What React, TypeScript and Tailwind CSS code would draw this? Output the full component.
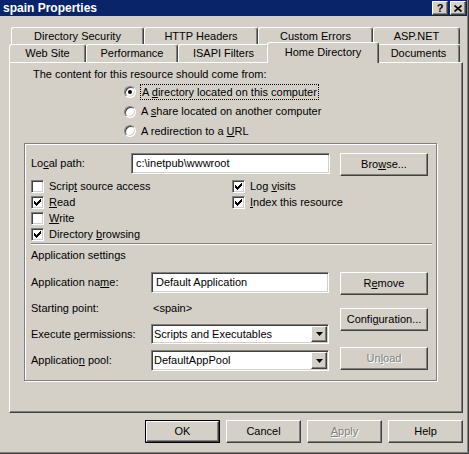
import React from 'react';

const RAISED =
  'border border-t-white border-l-white border-r-[#404040] border-b-[#404040] shadow-[inset_-1px_-1px_#808080,inset_1px_1px_#d4d0c8]';
const SUNKEN =
  'border border-t-[#808080] border-l-[#808080] border-r-white border-b-white shadow-[inset_1px_1px_#404040,inset_-1px_-1px_#d4d0c8]';
const TAB =
  'h-full flex items-center justify-center border-l border-t border-r border-white border-r-[#404040] shadow-[inset_-1px_0_#808080] rounded-t-[3px]';
const DISABLED = 'text-[#808080] [text-shadow:1px_1px_0_#fff]';

type BtnProps = { children: React.ReactNode; disabled?: boolean; className?: string };

const Button = ({ children, disabled, className = '' }: BtnProps) => (
  <div className={`${RAISED} h-[23px] bg-[#d4d0c8] flex items-center justify-center ${disabled ? DISABLED : ''} ${className}`}>
    {children}
  </div>
);

const CheckMark = () => (
  <svg width="7" height="7" viewBox="0 0 7 7" shapeRendering="crispEdges">
    <rect x="6" y="0" width="1" height="1" />
    <rect x="5" y="1" width="2" height="1" />
    <rect x="0" y="2" width="1" height="1" />
    <rect x="4" y="2" width="3" height="1" />
    <rect x="0" y="3" width="2" height="1" />
    <rect x="3" y="3" width="3" height="1" />
    <rect x="0" y="4" width="5" height="1" />
    <rect x="1" y="5" width="3" height="1" />
    <rect x="2" y="6" width="1" height="1" />
  </svg>
);

const Check = ({ checked, children, tall }: { checked?: boolean; children: React.ReactNode; tall?: boolean }) => (
  <div className={`flex items-center gap-[5px] ${tall ? 'h-[17px]' : 'h-[16px]'}`}>
    <span className={`${SUNKEN} w-[13px] h-[13px] bg-white flex items-center justify-center shrink-0`}>
      {checked && <CheckMark />}
    </span>
    <span>{children}</span>
  </div>
);

const Radio = ({ checked, children, h }: { checked?: boolean; children: React.ReactNode; h: string }) => (
  <div className={`flex items-center gap-[5px] pl-[114px] ${h}`}>
    <span className="w-[12px] h-[12px] rounded-full bg-white border border-t-[#808080] border-l-[#808080] border-r-white border-b-white shadow-[inset_1px_1px_#404040,inset_-1px_-1px_#d4d0c8] flex items-center justify-center shrink-0">
      {checked && <span className="w-[4px] h-[4px] rounded-full bg-black" />}
    </span>
    {children}
  </div>
);

const Select = ({ value, className = '' }: { value: string; className?: string }) => (
  <div className={`${SUNKEN} bg-white p-[1px] flex w-[178px] ${className}`}>
    <span className="flex-1 pl-[1px] flex items-center">{value}</span>
    <span className={`${RAISED} w-[16px] h-full bg-[#d4d0c8] flex items-center justify-center`}>
      <svg width="7" height="4" viewBox="0 0 7 4">
        <path d="M0 0h7L3.5 4z" fill="#000" />
      </svg>
    </span>
  </div>
);

const App = () => {
  return (
    <div className="w-[469px] h-[454px] bg-[#d4d0c8] border-r border-b border-[#404040] shadow-[inset_-1px_-1px_#808080] font-['Liberation_Sans',Arial,sans-serif] text-[11px] leading-[13px] text-black overflow-hidden select-none">
      {/* title bar */}
      <div className="h-[16px] mr-[1px] bg-[#0a246a] flex items-center justify-between pl-[3px] pr-[1px]">
        <span className="text-white font-bold text-[12px]">spain Properties</span>
        <div className="flex gap-[2px]">
          <div className={`${RAISED} w-[16px] h-[14px] bg-[#d4d0c8] flex items-center justify-center font-bold text-[11px] leading-none`}>?</div>
          <div className={`${RAISED} w-[16px] h-[14px] bg-[#d4d0c8] flex items-center justify-center`}>
            <svg width="8" height="7" viewBox="0 0 8 7">
              <path d="M0.5 0.5L7.5 6.5M7.5 0.5L0.5 6.5" stroke="#000" strokeWidth="1.6" />
            </svg>
          </div>
        </div>
      </div>

      {/* tabs */}
      <div className="mt-[11px] h-[17px] flex pl-[11px]">
        <div className={`${TAB} w-[133px]`}>Directory Security</div>
        <div className={`${TAB} w-[114px]`}>HTTP Headers</div>
        <div className={`${TAB} w-[115px]`}>Custom Errors</div>
        <div className={`${TAB} w-[87px]`}>ASP.NET</div>
      </div>
      <div className="h-[18px] flex items-start pl-[9px]">
        <div className={`${TAB} w-[77px]`}>Web Site</div>
        <div className={`${TAB} w-[92px]`}>Performance</div>
        <div className={`${TAB} w-[91px]`}>ISAPI Filters</div>
        <div className="relative z-10 -mt-[2px] -mx-[2px] h-[21px] w-[112px] shrink-0 bg-[#d4d0c8] border-l border-t border-r border-white border-r-[#404040] shadow-[inset_-1px_0_#808080] rounded-t-[3px] flex justify-center pt-[3px]">
          Home Directory
        </div>
        <div className={`${TAB} w-[83px]`}>Documents</div>
      </div>

      {/* tab page */}
      <div className="ml-[9px] w-[454px] h-[351px] border border-t-white border-l-white border-r-[#404040] border-b-[#404040] shadow-[inset_-1px_-1px_#808080] flex flex-col">
        <p className="ml-[23px] mt-[5px]">The content for this resource should come from:</p>
        <div className="mt-[1px] flex flex-col">
          <Radio checked h="h-[20px]">
            <span className="-ml-[1px] px-[1px] border border-dotted border-black leading-[14px]">
              A <u>d</u>irectory located on this computer
            </span>
          </Radio>
          <Radio h="h-[19px]">
            <span>
              A <u>s</u>hare located on another computer
            </span>
          </Radio>
          <Radio h="h-[20px]">
            <span>
              A redirection to a <u>U</u>RL
            </span>
          </Radio>
        </div>

        {/* group box */}
        <div className="mt-[2px] ml-[14px] w-[413px] h-[238px] border border-[#808080] shadow-[inset_1px_1px_#fff,1px_1px_#fff] flex flex-col">
          <div className="mt-[9px] pl-[6px] flex items-start">
            <span className="w-[100px] leading-[21px]">
              Lo<u>c</u>al path:
            </span>
            <div className={`${SUNKEN} w-[199px] h-[21px] bg-white pl-[4px] flex items-center`}>c:\inetpub\wwwroot</div>
            <Button className="ml-[10px] w-[88px]">
              Bro<u>w</u>se...
            </Button>
          </div>

          <div className="mt-[2px] pl-[6px] flex">
            <div className="w-[201px] flex flex-col">
              <Check>
                Scrip<u>t</u> source access
              </Check>
              <Check checked>
                <u>R</u>ead
              </Check>
              <Check>
                <u>W</u>rite
              </Check>
              <Check checked tall>
                Directory <u>b</u>rowsing
              </Check>
            </div>
            <div className="flex flex-col">
              <Check checked>
                Log <u>v</u>isits
              </Check>
              <Check checked>
                <u>I</u>ndex this resource
              </Check>
            </div>
          </div>

          <div className="ml-[6px] w-[401px] h-[2px] border-t border-b border-t-[#808080] border-b-white" />
          <p className="mt-[4px] pl-[6px]">Application settings</p>

          <div className="mt-[10px] pl-[6px] flex items-start">
            <div className="flex flex-col">
              <div className="h-[21px] flex items-center">
                <span className="w-[120px]">
                  Application na<u>m</u>e:
                </span>
                <div className={`${SUNKEN} w-[178px] h-[21px] bg-white pl-[4px] flex items-center`}>Default Application</div>
              </div>
              <div className="h-[31px] flex items-center">
                <span className="w-[122px]">Starting point:</span>
                <span>&lt;spain&gt;</span>
              </div>
              <div className="h-[20px] flex items-center">
                <span className="w-[120px]">
                  Execute <u>p</u>ermissions:
                </span>
                <Select value="Scripts and Executables" className="h-[20px]" />
              </div>
              <div className="mt-[6px] h-[21px] flex items-center">
                <span className="w-[120px]">
                  Applicatio<u>n</u> pool:
                </span>
                <Select value="DefaultAppPool" className="h-[21px]" />
              </div>
            </div>
            <div className="ml-[11px] flex flex-col">
              <Button className="w-[88px]">
                R<u>e</u>move
              </Button>
              <Button className="mt-[13px] w-[88px]">
                Confi<u>g</u>uration...
              </Button>
              <Button disabled className="mt-[16px] w-[88px]">
                Un<u>l</u>oad
              </Button>
            </div>
          </div>
        </div>
      </div>

      {/* dialog buttons */}
      <div className="mt-[7px] pl-[145px] flex gap-[6px]">
        <div className="w-[75px] h-[23px] border border-black flex">
          <Button className="flex-1 h-full">OK</Button>
        </div>
        <Button className="w-[75px]">Cancel</Button>
        <Button disabled className="w-[75px]">
          <u>A</u>pply
        </Button>
        <Button className="w-[75px]">Help</Button>
      </div>
    </div>
  );
};

export default App;
